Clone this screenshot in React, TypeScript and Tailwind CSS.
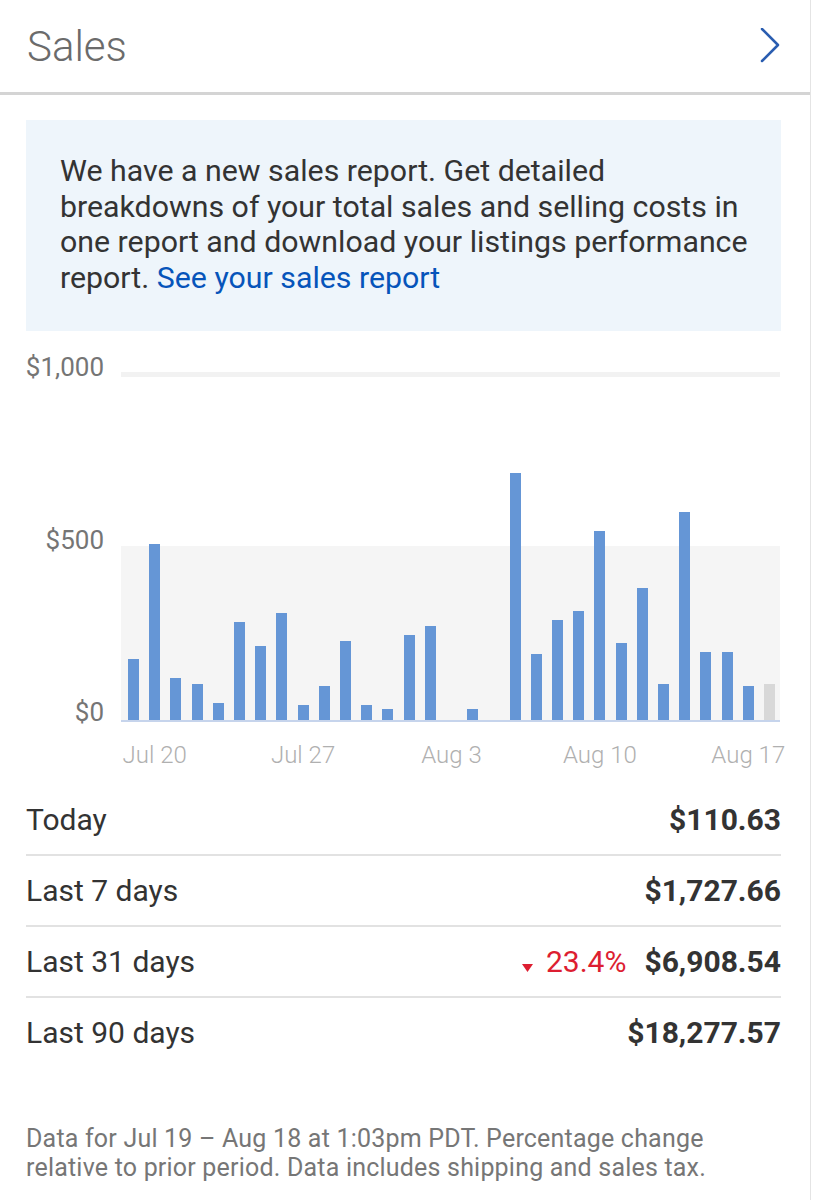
const bars = [
  61, 176, 42, 36, 17, 98, 74, 107, 15, 34, 79, 15, 11, 85, 94, 0, 11, 0, 247, 66, 100, 109, 189, 77,
  132, 36, 208, 68, 68, 34, 36,
];

const ticks = [
  { i: 1, label: "Jul 20" },
  { i: 8, label: "Jul 27" },
  { i: 15, label: "Aug 3" },
  { i: 22, label: "Aug 10" },
  { i: 29, label: "Aug 17" },
];

const rows = [
  { label: "Today", value: "$110.63" },
  { label: "Last 7 days", value: "$1,727.66" },
  { label: "Last 31 days", value: "$6,908.54", change: "23.4%" },
  { label: "Last 90 days", value: "$18,277.57" },
];

function SalesChart() {
  // viewBox keeps page coordinates so the numbers line up with the design
  return (
    <svg width="810" height="454" viewBox="0 331 810 454" className="block overflow-visible">
      <rect x="121" y="372" width="659" height="5" fill="#f2f2f2" />
      <rect x="121" y="546" width="659" height="174" fill="#f5f5f5" />
      {bars.map((h, i) =>
        h > 0 ? (
          <rect
            key={i}
            x={128 + Math.round(i * 21.2)}
            y={720 - h}
            width="11"
            height={h}
            fill={i === bars.length - 1 ? "#d8d8d8" : "#6596d6"}
          />
        ) : null
      )}
      <rect x="121" y="720" width="659" height="2" fill="#c6d4ec" />

      <text x="104" y="376" textAnchor="end" className="fill-[#757575] text-[26px]">
        $1,000
      </text>
      <text x="104" y="549" textAnchor="end" className="fill-[#757575] text-[26px]">
        $500
      </text>
      <text x="104" y="721" textAnchor="end" className="fill-[#757575] text-[26px]">
        $0
      </text>

      {ticks.map((t) => (
        <text
          key={t.label}
          x={128 + t.i * 21.2 + 5.5}
          y="763"
          textAnchor="middle"
          className="fill-[#b0b0b0] text-[24px] font-light"
        >
          {t.label}
        </text>
      ))}
    </svg>
  );
}

export default function App() {
  return (
    <div className="min-h-screen bg-white font-['Roboto',sans-serif] text-[#333]">
      <div className="w-[811px] min-h-[1200px] border-r border-[#e4e4e4]">
        <header className="h-[95px] border-b-[3px] border-[#d4d4d4] pl-[27px] pr-[29px] flex items-center justify-between">
          <h1 className="text-[42px] font-light text-[#6b6b6b]">Sales</h1>
          <svg width="22" height="36" viewBox="0 0 22 36" fill="none">
            <polyline
              points="3,1 19,17 3,33"
              stroke="#2a5db0"
              strokeWidth="2.5"
              strokeLinecap="round"
              strokeLinejoin="round"
            />
          </svg>
        </header>

        <div className="pl-[26px] pr-[29px] pt-[25px]">
          <p className="bg-[#eef5fb] pl-[34px] pr-[28px] pt-[33px] pb-[36px] text-[30.3px] leading-[35.5px] text-[#333]">
            We have a new sales report. Get detailed breakdowns of your total sales and selling costs in
            one report and download your listings performance report.{" "}
            <a href="#" className="text-[#0654ba]">
              See your sales report
            </a>
          </p>
        </div>

        <SalesChart />

        <div className="pl-[26px] pr-[29px]">
          {rows.map((r, i) => (
            <div
              key={r.label}
              className={
                i < rows.length - 1
                  ? "h-[71px] flex items-center justify-between border-b-2 border-[#e2e2e2]"
                  : "h-[69px] flex items-center justify-between"
              }
            >
              <span className="text-[30px] text-[#333]">{r.label}</span>
              <div className="flex items-center">
                {r.change && (
                  <span className="flex items-center mr-[18px] text-[30px] text-[#dd1e31]">
                    <svg width="11" height="8" viewBox="0 0 11 8" className="mt-[12px] mr-[13px]">
                      <polygon points="0,0 11,0 5.5,8" fill="#dd1e31" />
                    </svg>
                    {r.change}
                  </span>
                )}
                <span className="text-[30px] font-bold text-[#333]">{r.value}</span>
              </div>
            </div>
          ))}

          <p className="mt-[57px] text-[25px] leading-[29px] tracking-[0.2px] text-[#767676]">
            Data for Jul 19 – Aug 18 at 1:03pm PDT. Percentage change relative to prior period. Data includes
            shipping and sales tax.
          </p>
        </div>
      </div>
    </div>
  );
}
